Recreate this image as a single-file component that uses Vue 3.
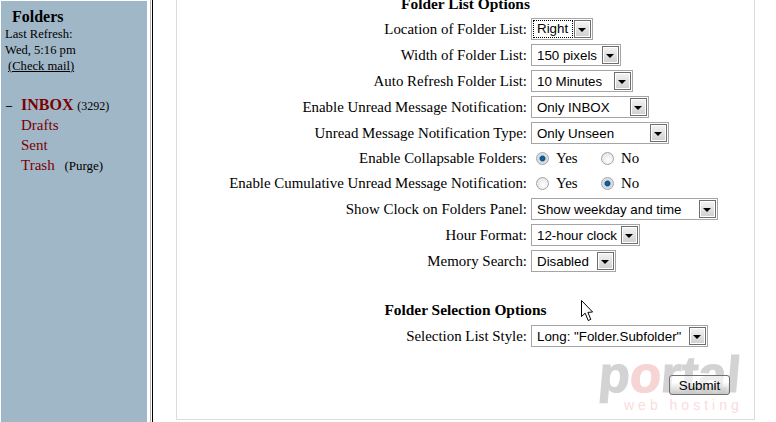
<template>
  <div class="page">
    <aside class="sidebar">
      <div class="side-title">Folders</div>
      <div class="refresh">
        <div>Last Refresh:</div>
        <div>Wed, 5:16 pm</div>
        <div class="check"><a>(Check mail)</a></div>
      </div>
      <ul class="folders">
        <li class="inbox"><span class="dash">–</span><b>INBOX</b> <small>(3292)</small></li>
        <li>Drafts</li>
        <li>Sent</li>
        <li>Trash <small class="purge">(Purge)</small></li>
      </ul>
    </aside>
    <div class="divider"></div>
    <main class="options">
      <h4 class="first">Folder List Options</h4>
      <div v-for="row in rows" :key="row.label" class="row" :class="{ short: row.radio }">
        <label>{{ row.label }}:</label>
        <div v-if="row.radio" class="radios">
          <span class="radio-item"><i class="radio" :class="{ on: row.radio === 'Yes' }"></i>Yes</span>
          <span class="radio-item"><i class="radio" :class="{ on: row.radio === 'No' }"></i>No</span>
        </div>
        <div v-else class="select" :class="{ focus: row.focus }" :style="{ width: row.width + 'px' }">
          <span class="value">{{ row.value }}</span>
          <span class="arrow"></span>
        </div>
      </div>
      <h4 class="second">Folder Selection Options</h4>
      <div class="row">
        <label>Selection List Style:</label>
        <div class="select" style="width: 177px">
          <span class="value">Long: "Folder.Subfolder"</span>
          <span class="arrow"></span>
        </div>
      </div>
      <div class="actions">
        <button class="submit">Submit</button>
      </div>
    </main>

    <div class="logo">
      <div class="logo-main">p<span>o</span>rtal</div>
      <div class="logo-sub">web hosting</div>
    </div>

    <svg class="cursor" width="13" height="22" viewBox="0 0 13 22">
      <path d="M0.5 0.5 L0.5 16.5 L4.2 13.2 L7.2 20.5 L9.8 19.4 L6.9 12.4 L11.6 12 Z" fill="#fff" stroke="#000" stroke-width="1" />
    </svg>
  </div>
</template>

<script setup>
const rows = [
  { label: 'Location of Folder List', value: 'Right', width: 62, focus: true },
  { label: 'Width of Folder List', value: '150 pixels', width: 90 },
  { label: 'Auto Refresh Folder List', value: '10 Minutes', width: 102 },
  { label: 'Enable Unread Message Notification', value: 'Only INBOX', width: 118 },
  { label: 'Unread Message Notification Type', value: 'Only Unseen', width: 138 },
  { label: 'Enable Collapsable Folders', radio: 'Yes' },
  { label: 'Enable Cumulative Unread Message Notification', radio: 'No' },
  { label: 'Show Clock on Folders Panel', value: 'Show weekday and time', width: 187 },
  { label: 'Hour Format', value: '12-hour clock', width: 109 },
  { label: 'Memory Search', value: 'Disabled', width: 85 }
]
</script>

<style>
html, body {
  margin: 0;
  background: #fff;
  overflow: hidden;
}
</style>

<style scoped>
.page {
  position: relative;
  display: flex;
  width: 776px;
  height: 422px;
  overflow: hidden;
  background: #fff;
  color: #000;
  font-family: "Liberation Serif", serif;
  font-size: 14.9px;
}

.sidebar {
  box-sizing: border-box;
  width: 146px;
  margin: 1px 0 0 1px;
  padding: 6px 0 0 4px;
  background: #a0b7c8;
}

.side-title {
  padding-left: 7px;
  font-size: 16px;
  font-weight: bold;
  line-height: 19px;
}

.refresh {
  font-size: 12.6px;
  line-height: 16px;
}

.check {
  padding-left: 3px;
}

.check a {
  text-decoration: underline;
}

.folders {
  margin: 21px 0 0;
  padding: 0 0 0 16px;
  list-style: none;
  color: #7b0000;
  font-size: 15px;
  line-height: 20px;
}

.folders li {
  position: relative;
}

.inbox {
  margin-bottom: -1px;
}

.inbox b {
  font-size: 16px;
}

.dash {
  position: absolute;
  left: -15px;
  color: #000;
  font-weight: bold;
  font-size: 12px;
}

.folders small {
  color: #000;
  font-size: 12px;
}

.folders .purge {
  margin-left: 6px;
  font-size: 13px;
}

.divider {
  box-sizing: border-box;
  width: 3px;
  margin-left: 3px;
  border-left: 1px solid #b4b4b4;
  border-right: 1px solid #000;
}

.options {
  box-sizing: border-box;
  width: 579px;
  height: 420px;
  margin-left: 23px;
  border-right: 1px solid #dcdcdc;
  border-bottom: 1px solid #dcdcdc;
  border-left: 1px solid #dcdcdc;
}

h4 {
  margin: 0;
  width: 577px;
  text-align: center;
  font-size: 15.4px;
  line-height: 20px;
}

.first {
  margin-top: -6px;
  margin-bottom: 2px;
}

.second {
  margin-top: 26px;
  margin-bottom: 3px;
}

.row {
  display: flex;
  align-items: center;
  gap: 4px;
  height: 26px;
}

.row.short {
  height: 25px;
}

label {
  width: 350px;
  text-align: right;
  white-space: nowrap;
}

.select {
  box-sizing: border-box;
  display: flex;
  align-items: center;
  justify-content: space-between;
  height: 22px;
  padding: 0 1px 0 5px;
  border: 1px solid #a5a5a5;
  background: #fff;
  font-family: "Liberation Sans", sans-serif;
  font-size: 13.33px;
  white-space: nowrap;
}

.focus .value {
  flex: 1;
  margin: 0 1px 0 -4px;
  padding-left: 4px;
  outline: 1px dotted #000;
  outline-offset: -1px;
  line-height: 18px;
}

.arrow {
  box-sizing: border-box;
  position: relative;
  flex: none;
  width: 17px;
  height: 18px;
  border: 1px solid #6e6e6e;
  box-shadow: inset 0 0 0 1px #fff;
  background: linear-gradient(#f4f4f4, #cfcfcf);
}

.arrow::after {
  content: "";
  position: absolute;
  left: 3px;
  top: 7px;
  border-style: solid;
  border-width: 4px 4.5px 0;
  border-color: #000 transparent transparent;
}

.radios {
  display: flex;
  padding-left: 5px;
}

.radio-item {
  display: flex;
  align-items: center;
  gap: 7px;
  width: 65px;
}

.radio {
  box-sizing: border-box;
  width: 13px;
  height: 13px;
  border: 1px solid #a3a3a3;
  border-radius: 50%;
  background: radial-gradient(circle at 60% 65%, #fff, #dcdcdc);
}

.radio.on {
  background: radial-gradient(circle at 50% 50%, #0f6fb0 0, #0a4f86 28%, #cfd8df 45%, #f2f2f2 100%);
}

.actions {
  display: flex;
  justify-content: flex-end;
  padding: 26px 24px 0 0;
}

.submit {
  box-sizing: border-box;
  position: relative;
  z-index: 2;
  width: 61px;
  height: 20px;
  padding: 0;
  border: 1px solid #707070;
  border-radius: 3px;
  background: linear-gradient(rgba(255, 255, 255, 0.6) 35%, rgba(195, 195, 195, 0.9));
  color: #000;
  font-family: "Liberation Sans", sans-serif;
  font-size: 13.33px;
}

.logo {
  position: absolute;
  left: 599px;
  top: 352px;
  width: 146px;
}

.logo-main {
  color: #d3d3d3;
  font-family: "Liberation Sans", sans-serif;
  font-size: 51px;
  font-weight: bold;
  line-height: 46px;
  -webkit-text-stroke: 1.2px #d3d3d3;
  transform: skewX(-5deg);
}

.logo-main span {
  color: #f7d5d5;
  -webkit-text-stroke-color: #f7d5d5;
}

.logo-sub {
  margin-top: -1px;
  padding-left: 25px;
  color: #fadcdc;
  font-family: "Liberation Sans", sans-serif;
  font-size: 14px;
  letter-spacing: 4px;
  line-height: 16px;
  white-space: nowrap;
}

.cursor {
  position: absolute;
  left: 581px;
  top: 300px;
}
</style>
